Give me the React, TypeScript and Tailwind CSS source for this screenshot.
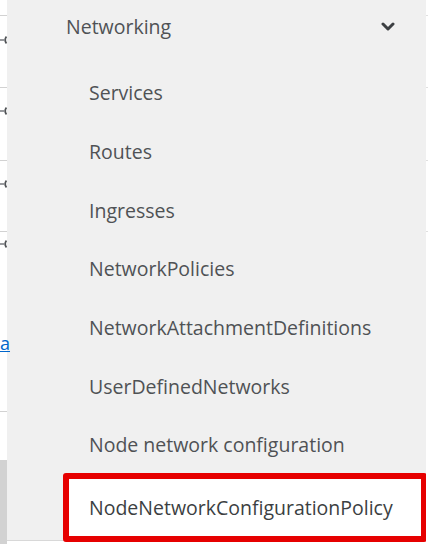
import React from "react";

const Stub = () => (
  <svg width="7" height="10" viewBox="0 0 7 10" className="block">
    <path d="M0 5 H4" stroke="#6a6e73" strokeWidth="1.4" />
    <path d="M6.5 1.5 Q3.8 5 6.5 8.5" stroke="#4f5255" strokeWidth="1.8" fill="none" />
  </svg>
);

const items = [
  "Services",
  "Routes",
  "Ingresses",
  "NetworkPolicies",
  "NetworkAttachmentDefinitions",
  "UserDefinedNetworks",
  "Node network configuration",
];

export default function App() {
  return (
    <div
      className="flex w-[428px] h-[544px] bg-white overflow-hidden"
      style={{ fontFamily: '"Open Sans", "Noto Sans", sans-serif' }}
    >
      {/* left strip */}
      <div className="flex flex-col w-[7px] shrink-0 bg-white">
        <div className="h-[16px] shrink-0 border-b border-[#d2d2d2]" />
        <div className="h-[72px] shrink-0 border-b border-[#d2d2d2] pt-[19px]">
          <Stub />
        </div>
        <div className="h-[73px] shrink-0 border-b border-[#d2d2d2] pt-[18px]">
          <Stub />
        </div>
        <div className="h-[71px] shrink-0 border-b border-[#d2d2d2] pt-[18px]">
          <Stub />
        </div>
        <div className="h-[180px] shrink-0 border-b border-[#d2d2d2] relative">
          <div className="absolute left-0 top-[7px]">
            <Stub />
          </div>
          <div className="absolute left-0 top-[102px] text-[18px] leading-none text-[#0066cc] underline">
            a
          </div>
        </div>
        <div className="h-[48px] shrink-0" />
        <div className="flex-1 bg-[#d2d2d2]" />
      </div>

      {/* panel */}
      <div className="flex flex-col w-[419px] shrink-0 bg-[#f0f0f0] border-b border-[#d8d8d8] h-[541px]">
        <div className="h-[63.5px] shrink-0 flex items-start pt-[13px] pl-[59px] pr-[31px]">
          <span className="flex-1 text-[19.5px] leading-[28px] text-[#4f5255]">Networking</span>
          <svg width="14" height="10" viewBox="0 0 14 10" className="mt-[9px]">
            <path d="M2 2 L7 7 L12 2" stroke="#3c3f42" strokeWidth="3" fill="none" strokeLinecap="round" strokeLinejoin="round" />
          </svg>
        </div>
        {items.map((t) => (
          <div key={t} className="h-[58.7px] shrink-0 flex items-center pl-[82px] text-[19.5px] text-[#4f5255]">
            {t}
          </div>
        ))}
        <div className="ml-[56px] -mt-[1px] h-[69px] w-[364px] shrink-0 border-[6px] border-[#e60000] rounded-[3px] bg-white flex items-center pl-[20px] text-[19.5px] text-[#3c3f42]">
          NodeNetworkConfigurationPolicy
        </div>
      </div>
      <div className="flex flex-col flex-1 bg-white">
        <div className="h-[16px] shrink-0 border-b border-[#e0e0e0]" />
        <div className="h-[72px] shrink-0 border-b border-[#e0e0e0]" />
        <div className="h-[73px] shrink-0 border-b border-[#e0e0e0]" />
        <div className="h-[71px] shrink-0 border-b border-[#e0e0e0]" />
      </div>
    </div>
  );
}
